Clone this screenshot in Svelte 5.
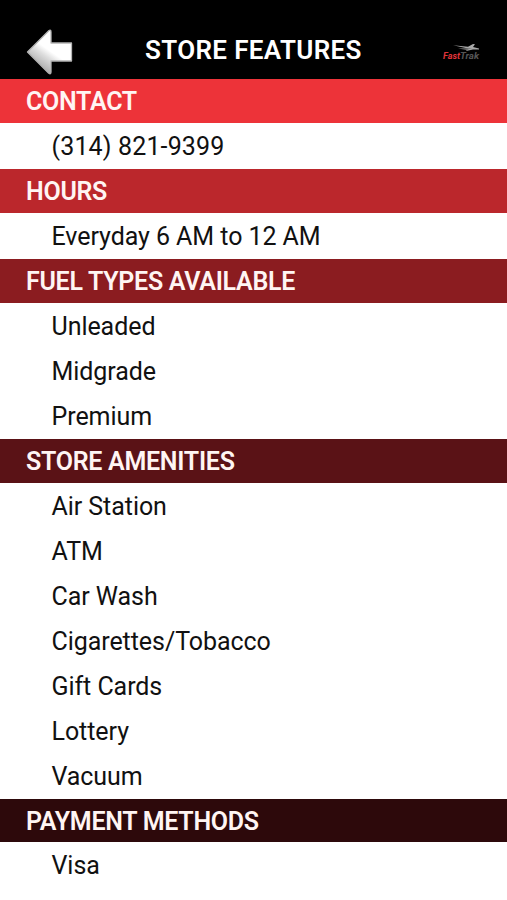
<script>
	const sections = [
		{ title: "CONTACT", color: "#ed3339", items: ["(314) 821-9399"] },
		{ title: "HOURS", color: "#bb272c", items: ["Everyday 6 AM to 12 AM"] },
		{
			title: "FUEL TYPES AVAILABLE",
			color: "#8b1c20",
			items: ["Unleaded", "Midgrade", "Premium"],
		},
		{
			title: "STORE AMENITIES",
			color: "#5a1216",
			items: [
				"Air Station",
				"ATM",
				"Car Wash",
				"Cigarettes/Tobacco",
				"Gift Cards",
				"Lottery",
				"Vacuum",
			],
		},
		{ title: "PAYMENT METHODS", color: "#2d090b", items: ["Visa"] },
	];
</script>

<div class="screen">
	<header>
		<button class="back" aria-label="Back">
			<svg width="50" height="50" viewBox="0 0 50 50">
				<defs>
					<linearGradient id="shine" x1="0.2" y1="0.85" x2="0.55" y2="0.35">
						<stop offset="0" stop-color="#a5a5a5" />
						<stop offset="0.55" stop-color="#dedede" />
						<stop offset="0.8" stop-color="#ffffff" />
					</linearGradient>
				</defs>
				<path
					d="M2.5 25 L24 3.500 Q26 2.500 26 5 V16 H46.500 V34 H26 V45 Q26 48 23.500 46 Z"
					fill="url(#shine)"
					stroke="#b4b4b4"
					stroke-width="1.300"
					stroke-linejoin="round"
				/>
			</svg>
		</button>
		<h1>STORE FEATURES</h1>
		<svg class="logo" width="40" height="20" viewBox="0 0 40 20">
			<path d="M11 3.300 L26 4.800 L31 2 L33 2.300 L31 5 L37 6.500 L37 7.500 L31 7.500 L24 9 L26 6.500 Z" fill="#a8a8a8" />
			<path d="M16 6.500 L30 6 L25 8 Z" fill="#777" />
			<text x="1" y="16.500" class="red" textLength="17" lengthAdjust="spacingAndGlyphs">Fast</text>
			<text x="18" y="16.500" class="gray" textLength="19" lengthAdjust="spacingAndGlyphs">Trak</text>
		</svg>
	</header>

	{#each sections as section}
		<h2 style="background-color: {section.color}">{section.title}</h2>
		<ul>
			{#each section.items as item}
				<li class:phone={item.startsWith("(")}>{item}</li>
			{/each}
		</ul>
	{/each}
</div>

<style>
	:global(body) {
		background: #fff;
	}

	.screen {
		height: 900px;
		overflow: hidden;
		font-family: Roboto, "Liberation Sans", sans-serif;
		font-size: 25px;
		color: #111;
	}

	header {
		display: flex;
		align-items: flex-end;
		height: 79px;
		box-sizing: border-box;
		background: #000;
		color: #fff;
	}

	.back {
		width: 50px;
		height: 50px;
		margin: 0 0 2px 25px;
		padding: 0;
		border: none;
		background: none;
	}

	.back svg {
		display: block;
	}

	h1 {
		flex: 1;
		margin: 0 0 9px 70px;
		font-size: 26px;
		font-weight: 600;
		line-height: 40px;
		letter-spacing: 0.350px;
		white-space: nowrap;
	}

	.logo {
		flex: none;
		margin: 0 25px 17px 0;
	}

	.logo text {
		font-size: 9px;
		font-weight: 700;
		font-style: italic;
	}

	.red {
		fill: #e0343a;
	}

	.gray {
		fill: #555;
	}

	h2 {
		height: 44.980px;
		margin: 0;
		padding-left: 26px;
		box-sizing: border-box;
		border-bottom: 1px solid #fff;
		font-size: 25px;
		font-weight: 600;
		line-height: 45px;
		letter-spacing: -0.280px;
		color: #fff5f3;
	}

	ul {
		margin: 0;
		padding: 0;
		list-style: none;
	}

	li {
		height: 44.980px;
		padding-left: 51.500px;
		line-height: 46px;
		letter-spacing: -0.060px;
	}

	.phone {
		letter-spacing: 0.150px;
	}
</style>
